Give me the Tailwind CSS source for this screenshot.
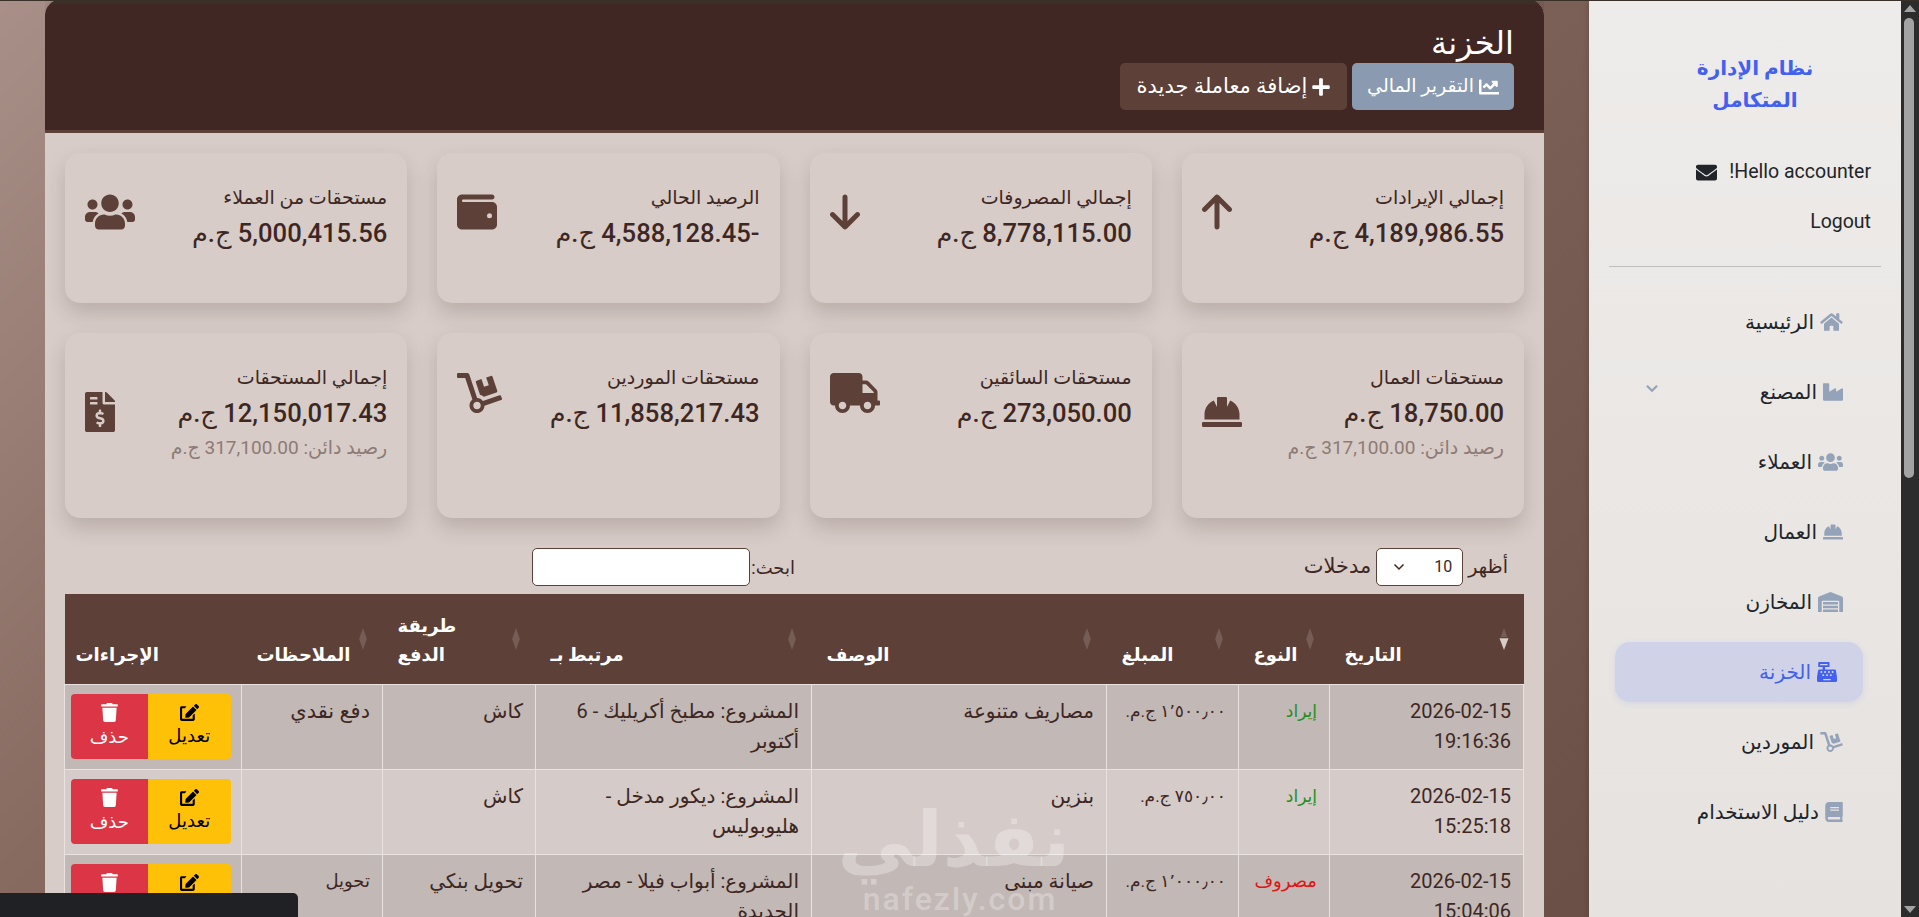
<!DOCTYPE html>
<html lang="ar" dir="rtl">
<head>
<meta charset="utf-8">
<title>الخزنة</title>
<script src="https://cdn.jsdelivr.net/npm/@tailwindcss/browser@4"></script>
</head>
<body class="m-0 overflow-hidden font-['Roboto','Noto_Sans','DejaVu_Sans',sans-serif]">
<div class="relative flex h-[917px] w-[1919px] overflow-hidden bg-[linear-gradient(135deg,#a89088_0%,#86695f_32%,#7a6056_55%,#6a5046_87%)] text-[#3e2723]">

  <!-- scrollbar -->
  <div class="relative w-[18px] shrink-0 bg-[#2c2c2c]">
    <div class="mx-auto mt-[5px] h-0 w-0 border-x-[6px] border-b-[7px] border-x-transparent border-b-[#a3a3a3]"></div>
    <div class="absolute left-[3px] top-[18px] h-[460px] w-[10px] rounded-full bg-[#a3a3a3]"></div>
    <div class="absolute bottom-[4px] left-[3px] h-0 w-0 border-x-[6px] border-t-[7px] border-x-transparent border-t-[#a3a3a3]"></div>
  </div>

  <!-- sidebar -->
  <aside class="flex w-[312px] shrink-0 flex-col bg-[linear-gradient(180deg,#eeecea,#e6e2e0)] shadow-[0_0_6px_rgba(0,0,0,0.15)]">
    <div class="mr-[56px] mt-[52px] h-[64px] w-[180px] text-center text-[20px] font-bold leading-[32px] text-[#4361ee]">نظام الإدارة المتكامل</div>
    <div class="mt-[41px] flex h-[30px] items-center gap-[12px] pr-[30px] text-[19.500px] text-[#212529]">
      <svg viewBox="0 0 512 512" class="order-2 h-[21px] w-[21px] fill-[#212529]"><path d="M502.3 190.8c3.9-3.1 9.7-.2 9.7 4.7V400c0 26.5-21.5 48-48 48H48c-26.5 0-48-21.5-48-48V195.6c0-5 5.7-7.8 9.7-4.7 22.4 17.4 52.1 39.5 154.1 113.6 21.1 15.4 56.7 47.8 92.2 47.6 35.7.3 72-32.8 92.3-47.6 102-74.1 131.6-96.3 154-113.7zM256 320c23.2.4 56.6-29.2 73.4-41.4 132.7-96.3 142.8-104.7 173.4-128.7 5.8-4.5 9.2-11.5 9.2-18.9v-19c0-26.5-21.5-48-48-48H48C21.5 64 0 85.5 0 112v19c0 7.4 3.4 14.3 9.2 18.9 30.6 23.9 40.7 32.4 173.4 128.7 16.8 12.2 50.2 41.800 73.4 41.4z"/></svg>
      <span>Hello accounter!</span>
    </div>
    <div class="mt-[20px] h-[30px] pr-[30px] text-[19.500px] leading-[30px] text-[#212529]">Logout</div>
    <div class="mx-[20px] mt-[29px] h-px bg-[#bdbdbd]"></div>

    <nav class="mt-[25px] flex flex-col gap-[10px] text-[20px] text-[#212529]">
      <a class="flex h-[60px] items-center gap-[6px] pr-[58px]">
        <svg viewBox="0 0 576 512" class="h-[20px] w-[23px] fill-[#94a3b8]"><path d="M280.37 148.26L96 300.11V464a16 16 0 0 0 16 16l112.06-.29a16 16 0 0 0 15.92-16V368a16 16 0 0 1 16-16h64a16 16 0 0 1 16 16v95.64a16 16 0 0 0 16 16.05L464 480a16 16 0 0 0 16-16V300L295.67 148.26a12.19 12.19 0 0 0-15.3 0zM571.6 251.47L488 182.56V44.05a12 12 0 0 0-12-12h-56a12 12 0 0 0-12 12v72.61L318.47 43a48 48 0 0 0-61 0L4.34 251.47a12 12 0 0 0-1.6 16.9l25.5 31A12 12 0 0 0 45.15 301l235.22-193.74a12.19 12.19 0 0 1 15.3 0L530.9 301a12 12 0 0 0 16.9-1.6l25.5-31a12 12 0 0 0-1.7-16.93z"/></svg>
        <span>الرئيسية</span>
      </a>
      <a class="relative flex h-[60px] items-center gap-[6px] pr-[58px]">
        <svg viewBox="0 0 512 512" class="h-[20px] w-[20px] fill-[#94a3b8]"><path d="M475.115 163.781L336 252.309v-68.28c0-18.916-20.931-30.399-36.885-20.248L160 252.309V56c0-13.255-10.745-24-24-24H24C10.745 32 0 42.745 0 56v400c0 13.255 10.745 24 24 24h464c13.255 0 24-10.745 24-24V184.029c0-18.917-20.931-30.399-36.885-20.248z"/></svg>
        <span>المصنع</span>
        <svg viewBox="0 0 12 8" class="absolute left-[56px] top-[22px] h-[9px] w-[14px] fill-none stroke-[#94a3b8] stroke-2"><path d="M1.5 1.5 6 6l4.500-4.500"/></svg>
      </a>
      <a class="flex h-[60px] items-center gap-[6px] pr-[58px]">
        <svg viewBox="0 0 640 512" class="h-[20px] w-[25px] fill-[#94a3b8]"><path d="M96 224c35.3 0 64-28.7 64-64s-28.7-64-64-64-64 28.7-64 64 28.7 64 64 64zm448 0c35.3 0 64-28.7 64-64s-28.7-64-64-64-64 28.7-64 64 28.7 64 64 64zm32 32h-64c-17.6 0-33.5 7.1-45.1 18.6 40.3 22.1 68.9 62 75.1 109.4h66c17.7 0 32-14.3 32-32v-32c0-35.3-28.7-64-64-64zm-256 0c61.9 0 112-50.1 112-112S381.900 32 320 32 208 82.100 208 144s50.100 112 112 112zm76.800 32h-8.300c-20.800 10-43.900 16-68.500 16s-47.600-6-68.500-16h-8.300C179.600 288 128 339.600 128 403.200V432c0 26.500 21.500 48 48 48h288c26.500 0 48-21.500 48-48v-28.800c0-63.600-51.600-115.200-115.200-115.200zm-223.700-13.400C161.500 263.100 145.600 256 128 256H64c-35.300 0-64 28.700-64 64v32c0 17.700 14.300 32 32 32h65.900c6.300-47.400 34.900-87.300 75.200-109.400z"/></svg>
        <span>العملاء</span>
      </a>
      <a class="flex h-[60px] items-center gap-[6px] pr-[58px]">
        <svg viewBox="0 0 512 512" class="h-[20px] w-[20px] fill-[#94a3b8]"><path d="M480 288c0-80.250-49.280-148.920-119.190-177.620L320 192V80a16 16 0 0 0-16-16h-96a16 16 0 0 0-16 16v112l-40.810-81.620C81.280 139.080 32 207.750 32 288v64h448zm16 96H16a16 16 0 0 0-16 16v32a16 16 0 0 0 16 16h480a16 16 0 0 0 16-16v-32a16 16 0 0 0-16-16z"/></svg>
        <span>العمال</span>
      </a>
      <a class="flex h-[60px] items-center gap-[6px] pr-[58px]">
        <svg viewBox="0 0 640 512" class="h-[20px] w-[25px] fill-[#94a3b8]"><path d="M504 352H136.400c-4.400 0-8 3.600-8 8l-.1 48c0 4.400 3.600 8 8 8H504c4.400 0 8-3.600 8-8v-48c0-4.400-3.600-8-8-8zm0 96H136.100c-4.400 0-8 3.600-8 8l-.1 48c0 4.400 3.600 8 8 8h368c4.400 0 8-3.600 8-8v-48c0-4.400-3.600-8-8-8zm0-192H136.600c-4.400 0-8 3.600-8 8l-.1 48c0 4.400 3.600 8 8 8H504c4.400 0 8-3.600 8-8v-48c0-4.400-3.600-8-8-8zm106.500-139L338.400 3.700a48.150 48.150 0 0 0-36.900 0L29.500 117C11.700 124.500 0 141.900 0 161.300V504c0 4.400 3.600 8 8 8h80c4.400 0 8-3.600 8-8V256c0-17.600 14.600-32 32.600-32h382.800c18 0 32.600 14.400 32.600 32v248c0 4.400 3.600 8 8 8h80c4.400 0 8-3.600 8-8V161.300c0-19.400-11.700-36.800-29.500-44.300z"/></svg>
        <span>المخازن</span>
      </a>
      <a class="ml-[26px] mr-[38px] flex h-[60px] items-center gap-[6px] rounded-[15px] bg-[#d0d3e8] pr-[26px] text-[#4361ee] shadow-[0_2px_6px_rgba(67,97,238,0.1)]">
        <svg viewBox="0 0 512 512" class="h-[20px] w-[20px] fill-[#4361ee]"><path d="M511.100 378.800l-26.700-160c-2.600-15.400-15.900-26.700-31.600-26.700H208v-64h96c8.800 0 16-7.200 16-16V16c0-8.800-7.200-16-16-16H48c-8.800 0-16 7.200-16 16v96c0 8.800 7.200 16 16 16h96v64H59.100c-15.600 0-29 11.300-31.600 26.700L.8 378.700c-.6 3.500-.9 7-.9 10.500V480c0 17.700 14.300 32 32 32h448c17.700 0 32-14.300 32-32v-90.700c.1-3.500-.2-7-.8-10.500zM280 248c0-8.800 7.200-16 16-16h16c8.800 0 16 7.200 16 16v16c0 8.800-7.200 16-16 16h-16c-8.800 0-16-7.200-16-16v-16zm-32 64h16c8.800 0 16 7.200 16 16v16c0 8.800-7.200 16-16 16h-16c-8.800 0-16-7.200-16-16v-16c0-8.800 7.200-16 16-16zm-32-80c8.800 0 16 7.200 16 16v16c0 8.800-7.200 16-16 16h-16c-8.800 0-16-7.200-16-16v-16c0-8.800 7.200-16 16-16h16zM80 80V48h192v32H80zm40 200h-16c-8.800 0-16-7.200-16-16v-16c0-8.800 7.200-16 16-16h16c8.800 0 16 7.200 16 16v16c0 8.800-7.200 16-16 16zm16 64v-16c0-8.800 7.200-16 16-16h16c8.800 0 16 7.200 16 16v16c0 8.800-7.200 16-16 16h-16c-8.800 0-16-7.200-16-16zm216 112c0 4.400-3.600 8-8 8H168c-4.400 0-8-3.600-8-8v-16c0-4.400 3.600-8 8-8h176c4.400 0 8 3.600 8 8v16zm24-112c0 8.800-7.200 16-16 16h-16c-8.800 0-16-7.200-16-16v-16c0-8.800 7.200-16 16-16h16c8.800 0 16 7.200 16 16v16zm48-80c0 8.800-7.200 16-16 16h-16c-8.800 0-16-7.200-16-16v-16c0-8.800 7.200-16 16-16h16c8.800 0 16 7.200 16 16v16z"/></svg>
        <span>الخزنة</span>
      </a>
      <a class="flex h-[60px] items-center gap-[6px] pr-[58px]">
        <svg viewBox="0 0 576 512" class="h-[20px] w-[23px] fill-[#94a3b8]"><path d="M294.200 277.700c18 5 34.700 13.400 49.500 24.700l161.500-53.800c8.400-2.800 12.900-11.900 10.100-20.200L454.900 47.200c-2.800-8.400-11.900-12.900-20.200-10.100l-61.100 20.400 33.100 99.400L346 177l-33.100-99.400-61.600 20.500c-8.400 2.800-12.900 11.900-10.100 20.200l53 159.400zm281 48.700L565 296c-2.800-8.400-11.900-12.900-20.200-10.100l-213.500 71.200c-17.200-22-43.600-36.400-73.500-37L158.400 21.900C154 8.800 141.800 0 128 0H16C7.200 0 0 7.200 0 16v32c0 8.800 7.200 16 16 16h88.900l92.200 276.700c-26.100 20.400-41.700 53.600-36 90.500 6.100 39.400 37.900 72.300 77.300 79.200 60.200 10.700 112.300-34.800 113.400-92.600l213.300-71.200c8.300-2.800 12.900-11.800 10.100-20.200zM256 464c-26.500 0-48-21.500-48-48s21.500-48 48-48 48 21.500 48 48-21.500 48-48 48z"/></svg>
        <span>الموردين</span>
      </a>
      <a class="flex h-[60px] items-center gap-[6px] pr-[58px]">
        <svg viewBox="0 0 448 512" class="h-[20px] w-[18px] fill-[#94a3b8]"><path d="M448 360V24c0-13.300-10.700-24-24-24H96C43 0 0 43 0 96v320c0 53 43 96 96 96h328c13.300 0 24-10.700 24-24v-16c0-7.500-3.500-14.300-8.900-18.700-4.200-15.400-4.200-59.300 0-74.700 5.400-4.300 8.900-11.100 8.900-18.600zM128 134c0-3.300 2.700-6 6-6h212c3.300 0 6 2.700 6 6v20c0 3.300-2.700 6-6 6H134c-3.300 0-6-2.700-6-6v-20zm0 64c0-3.300 2.700-6 6-6h212c3.300 0 6 2.700 6 6v20c0 3.300-2.700 6-6 6H134c-3.300 0-6-2.700-6-6v-20zm253.400 250H96c-17.700 0-32-14.300-32-32 0-17.600 14.400-32 32-32h285.400c-1.900 17.100-1.900 46.900 0 64z"/></svg>
        <span>دليل الاستخدام</span>
      </a>
    </nav>
  </aside>

  <!-- main -->
  <main class="ml-[45px] mr-[45px] h-[917px] w-[1499px] shrink-0 overflow-hidden">
    <section class="overflow-hidden rounded-t-[15px] bg-[#d7ccc8] shadow-[0_4px_20px_rgba(0,0,0,0.25)]">
      <header class="h-[133px] border-b-[3px] border-t-[4px] border-b-[#5d4037] border-t-[#3a3028] bg-[#402723] pr-[30px] pt-[20px]">
        <h1 class="h-[38px] text-[32px] font-normal leading-[38px] text-white">الخزنة</h1>
        <div class="mt-[1px] flex gap-[5px]">
          <a class="flex h-[47px] w-[162px] items-center justify-center gap-[5px] rounded-[5px] bg-[#8a9ab0] text-[19px] text-white">
            <svg viewBox="0 0 512 512" class="h-[20px] w-[20px] fill-white"><path d="M496 384H64V80c0-8.840-7.160-16-16-16H16C7.160 64 0 71.160 0 80v336c0 17.670 14.330 32 32 32h464c8.840 0 16-7.160 16-16v-32c0-8.840-7.160-16-16-16zM464 96H345.940c-21.380 0-32.090 25.850-16.970 40.970l32.400 32.400L288 242.750l-73.370-73.370c-12.500-12.500-32.760-12.500-45.250 0l-68.690 68.690c-6.250 6.250-6.250 16.380 0 22.630l22.620 22.620c6.250 6.250 16.380 6.250 22.630 0L192 237.250l73.370 73.370c12.500 12.500 32.760 12.500 45.250 0l96-96 32.400 32.400c15.120 15.120 40.970 4.410 40.970-16.970V112c0-8.840-7.160-16-16-16z"/></svg>
            <span>التقرير المالي</span>
          </a>
          <a class="flex h-[47px] w-[227px] items-center justify-center gap-[5px] rounded-[5px] bg-[#5d4037] text-[21px] text-white">
            <svg viewBox="0 0 448 512" class="h-[20px] w-[18px] fill-white"><path d="M416 208H272V64c0-17.670-14.330-32-32-32h-32c-17.670 0-32 14.330-32 32v144H32c-17.670 0-32 14.330-32 32v32c0 17.670 14.330 32 32 32h144v144c0 17.670 14.330 32 32 32h32c17.670 0 32-14.330 32-32V304h144c17.670 0 32-14.330 32-32v-32c0-17.670-14.330-32-32-32z"/></svg>
            <span>إضافة معاملة جديدة</span>
          </a>
        </div>
      </header>

      <div class="px-[20px] pt-[20px]">
        <!-- row 1 -->
        <div class="grid grid-cols-4 gap-[30px]">
          <div class="flex h-[150px] items-start justify-between rounded-[15px] bg-[#d7ccc8] px-[20px] pt-[30px] shadow-[0_10px_20px_rgba(62,39,35,0.18)]">
            <div><div class="h-[30px] text-[19px] leading-[30px]">إجمالي الإيرادات</div><div class="mt-[3px] h-[34px] text-[25.600px] font-medium leading-[34px]">4,189,986.55 ج.م</div></div>
            <svg viewBox="0 0 384 512" class="mt-[9px] h-[40px] w-[30px] fill-[#5d4037]"><path d="M214.600 41.400c-12.500-12.500-32.800-12.500-45.300 0l-160 160c-12.500 12.500-12.500 32.800 0 45.300s32.800 12.500 45.300 0L160 141.200V448c0 17.700 14.300 32 32 32s32-14.300 32-32V141.200L329.400 246.600c12.500 12.500 32.800 12.500 45.300 0s12.500-32.800 0-45.300l-160-160z"/></svg>
          </div>
          <div class="flex h-[150px] items-start justify-between rounded-[15px] bg-[#d7ccc8] px-[20px] pt-[30px] shadow-[0_10px_20px_rgba(62,39,35,0.18)]">
            <div><div class="h-[30px] text-[19px] leading-[30px]">إجمالي المصروفات</div><div class="mt-[3px] h-[34px] text-[25.600px] font-medium leading-[34px]">8,778,115.00 ج.م</div></div>
            <svg viewBox="0 0 384 512" class="mt-[9px] h-[40px] w-[30px] fill-[#5d4037]"><path d="M169.400 470.600c12.500 12.500 32.800 12.500 45.300 0l160-160c12.500-12.500 12.500-32.800 0-45.300s-32.800-12.500-45.300 0L224 370.800 224 64c0-17.700-14.300-32-32-32s-32 14.300-32 32l0 306.700L54.600 265.400c-12.500-12.500-32.800-12.500-45.300 0s-12.500 32.800 0 45.300l160 160z"/></svg>
          </div>
          <div class="flex h-[150px] items-start justify-between rounded-[15px] bg-[#d7ccc8] px-[20px] pt-[30px] shadow-[0_10px_20px_rgba(62,39,35,0.18)]">
            <div><div class="h-[30px] text-[19px] leading-[30px]">الرصيد الحالي</div><div class="mt-[3px] h-[34px] text-[25.600px] font-medium leading-[34px]">-4,588,128.45 ج.م</div></div>
            <svg viewBox="0 0 512 512" class="mt-[9px] h-[40px] w-[40px] fill-[#5d4037]"><path d="M64 32C28.700 32 0 60.700 0 96V416c0 35.300 28.700 64 64 64H448c35.300 0 64-28.700 64-64V192c0-35.300-28.700-64-64-64H80c-8.800 0-16-7.200-16-16s7.200-16 16-16H448c17.700 0 32-14.300 32-32s-14.300-32-32-32H64zM416 272a32 32 0 1 1 0 64 32 32 0 1 1 0-64z"/></svg>
          </div>
          <div class="flex h-[150px] items-start justify-between rounded-[15px] bg-[#d7ccc8] px-[20px] pt-[30px] shadow-[0_10px_20px_rgba(62,39,35,0.18)]">
            <div><div class="h-[30px] text-[19px] leading-[30px]">مستحقات من العملاء</div><div class="mt-[3px] h-[34px] text-[25.600px] font-medium leading-[34px]">5,000,415.56 ج.م</div></div>
            <svg viewBox="0 0 640 512" class="mt-[9px] h-[40px] w-[50px] fill-[#5d4037]"><path d="M96 224c35.300 0 64-28.700 64-64s-28.700-64-64-64-64 28.700-64 64 28.700 64 64 64zm448 0c35.300 0 64-28.700 64-64s-28.700-64-64-64-64 28.700-64 64 28.700 64 64 64zm32 32h-64c-17.600 0-33.500 7.100-45.100 18.600 40.300 22.100 68.900 62 75.100 109.400h66c17.700 0 32-14.300 32-32v-32c0-35.300-28.700-64-64-64zm-256 0c61.900 0 112-50.100 112-112S381.900 32 320 32 208 82.100 208 144s50.100 112 112 112zm76.800 32h-8.300c-20.800 10-43.900 16-68.500 16s-47.600-6-68.500-16h-8.300C179.600 288 128 339.600 128 403.200V432c0 26.500 21.500 48 48 48h288c26.500 0 48-21.500 48-48v-28.800c0-63.600-51.600-115.200-115.200-115.200zm-223.700-13.400C161.500 263.100 145.600 256 128 256H64c-35.300 0-64 28.700-64 64v32c0 17.700 14.300 32 32 32h65.900c6.300-47.400 34.900-87.300 75.200-109.400z"/></svg>
          </div>
        </div>

        <!-- row 2 -->
        <div class="mt-[30px] grid grid-cols-4 gap-[30px]">
          <div class="flex h-[185px] items-start justify-between rounded-[15px] bg-[#d7ccc8] px-[20px] pt-[30px] shadow-[0_10px_20px_rgba(62,39,35,0.18)]">
            <div><div class="h-[30px] text-[19px] leading-[30px]">مستحقات العمال</div><div class="mt-[3px] h-[34px] text-[25.600px] font-medium leading-[34px]">18,750.00 ج.م</div><div class="mt-[1px] h-[34px] text-[19px] leading-[34px] text-[#8d7b75]">رصيد دائن: 317,100.00 ج.م</div></div>
            <svg viewBox="0 0 512 512" class="mt-[29px] h-[40px] w-[40px] fill-[#5d4037]"><path d="M480 288c0-80.250-49.280-148.920-119.190-177.620L320 192V80a16 16 0 0 0-16-16h-96a16 16 0 0 0-16 16v112l-40.810-81.620C81.280 139.080 32 207.750 32 288v64h448zm16 96H16a16 16 0 0 0-16 16v32a16 16 0 0 0 16 16h480a16 16 0 0 0 16-16v-32a16 16 0 0 0-16-16z"/></svg>
          </div>
          <div class="flex h-[185px] items-start justify-between rounded-[15px] bg-[#d7ccc8] px-[20px] pt-[30px] shadow-[0_10px_20px_rgba(62,39,35,0.18)]">
            <div><div class="h-[30px] text-[19px] leading-[30px]">مستحقات السائقين</div><div class="mt-[3px] h-[34px] text-[25.600px] font-medium leading-[34px]">273,050.00 ج.م</div></div>
            <svg viewBox="0 0 640 512" class="mt-[10px] h-[40px] w-[50px] fill-[#5d4037]"><path d="M624 352h-16V243.900c0-12.700-5.100-24.900-14.100-33.900L494 110.100c-9-9-21.200-14.100-33.900-14.100H416V48c0-26.500-21.500-48-48-48H48C21.500 0 0 21.500 0 48v320c0 26.500 21.500 48 48 48h16c0 53 43 96 96 96s96-43 96-96h128c0 53 43 96 96 96s96-43 96-96h48c8.800 0 16-7.200 16-16v-32c0-8.800-7.200-16-16-16zM160 464c-26.500 0-48-21.500-48-48s21.500-48 48-48 48 21.500 48 48-21.500 48-48 48zm320 0c-26.500 0-48-21.500-48-48s21.500-48 48-48 48 21.500 48 48-21.500 48-48 48zm80-208H416V144h44.100l99.900 99.900V256z"/></svg>
          </div>
          <div class="flex h-[185px] items-start justify-between rounded-[15px] bg-[#d7ccc8] px-[20px] pt-[30px] shadow-[0_10px_20px_rgba(62,39,35,0.18)]">
            <div><div class="h-[30px] text-[19px] leading-[30px]">مستحقات الموردين</div><div class="mt-[3px] h-[34px] text-[25.600px] font-medium leading-[34px]">11,858,217.43 ج.م</div></div>
            <svg viewBox="0 0 576 512" class="mt-[10px] h-[40px] w-[45px] fill-[#5d4037]"><path d="M294.200 277.700c18 5 34.700 13.400 49.500 24.700l161.500-53.800c8.400-2.800 12.900-11.900 10.100-20.200L454.900 47.200c-2.800-8.400-11.900-12.900-20.200-10.100l-61.100 20.400 33.100 99.400L346 177l-33.100-99.400-61.600 20.500c-8.400 2.800-12.900 11.900-10.100 20.200l53 159.400zm281 48.700L565 296c-2.800-8.400-11.900-12.900-20.200-10.100l-213.500 71.200c-17.200-22-43.600-36.400-73.500-37L158.400 21.900C154 8.800 141.800 0 128 0H16C7.200 0 0 7.200 0 16v32c0 8.800 7.200 16 16 16h88.900l92.200 276.700c-26.100 20.400-41.700 53.600-36 90.500 6.100 39.400 37.900 72.300 77.300 79.200 60.200 10.700 112.300-34.800 113.400-92.600l213.300-71.200c8.300-2.800 12.900-11.800 10.100-20.200zM256 464c-26.500 0-48-21.500-48-48s21.500-48 48-48 48 21.500 48 48-21.500 48-48 48z"/></svg>
          </div>
          <div class="flex h-[185px] items-start justify-between rounded-[15px] bg-[#d7ccc8] px-[20px] pt-[30px] shadow-[0_10px_20px_rgba(62,39,35,0.18)]">
            <div><div class="h-[30px] text-[19px] leading-[30px]">إجمالي المستحقات</div><div class="mt-[3px] h-[34px] text-[25.600px] font-medium leading-[34px]">12,150,017.43 ج.م</div><div class="mt-[1px] h-[34px] text-[19px] leading-[34px] text-[#8d7b75]">رصيد دائن: 317,100.00 ج.م</div></div>
            <svg viewBox="0 0 384 512" class="mt-[29px] h-[40px] w-[30px] fill-[#5d4037]"><path d="M377 105L279.100 7c-4.500-4.500-10.600-7-17-7H256v128h128v-6.100c0-6.300-2.500-12.400-7-16.900zm-153 31V0H24C10.700 0 0 10.700 0 24v464c0 13.300 10.700 24 24 24h336c13.300 0 24-10.700 24-24V160H248c-13.200 0-24-10.800-24-24zM64 72c0-4.420 3.580-8 8-8h80c4.420 0 8 3.580 8 8v16c0 4.420-3.580 8-8 8H72c-4.420 0-8-3.580-8-8V72zm0 80v-16c0-4.420 3.580-8 8-8h80c4.420 0 8 3.580 8 8v16c0 4.420-3.580 8-8 8H72c-4.420 0-8-3.580-8-8zm144 263.880V440c0 4.420-3.580 8-8 8h-16c-4.420 0-8-3.580-8-8v-24.290c-11.290-.58-22.270-4.520-31.370-11.350-3.900-2.930-4.100-8.770-.57-12.140l11.750-11.210c2.770-2.640 6.890-2.760 10.130-.73 3.870 2.420 8.260 3.720 12.820 3.720h28.110c6.500 0 11.800-5.920 11.800-13.190 0-5.950-3.610-11.190-8.770-12.730l-45-13.500c-18.590-5.580-31.580-23.420-31.580-43.390 0-24.520 19.050-44.440 42.670-45.070V232c0-4.420 3.580-8 8-8h16c4.420 0 8 3.580 8 8v24.290c11.290.58 22.270 4.510 31.370 11.350 3.900 2.930 4.100 8.770.57 12.140l-11.750 11.210c-2.770 2.640-6.890 2.760-10.130.73-3.870-2.430-8.260-3.720-12.820-3.720h-28.110c-6.500 0-11.800 5.920-11.800 13.190 0 5.950 3.610 11.190 8.770 12.730l45 13.500c18.590 5.580 31.580 23.420 31.580 43.390 0 24.530-19.050 44.440-42.670 45.070z"/></svg>
          </div>
        </div>

        <!-- filters -->
        <div class="mt-[30px] flex h-[38px] items-center">
          <div class="flex w-[729px] items-center pr-[16px] text-[19px]">
            <span>أظهر</span>
            <div class="mx-[5px] flex h-[38px] w-[87px] items-center justify-between rounded-[5px] border border-[#5d4037] bg-white pl-[16px] pr-[10px] text-[16px]">
              <span>10</span>
              <svg viewBox="0 0 12 8" class="h-[8px] w-[12px] fill-none stroke-[#3e2723] stroke-[1.5]"><path d="M1.500 1.500 6 6l4.500-4.500"/></svg>
            </div>
            <span class="text-[21px]">مدخلات</span>
          </div>
          <div class="flex items-center text-[18px]">
            <span class="ml-[1px]">ابحث:</span>
            <div class="h-[38px] w-[218px] rounded-[5px] border border-[#5d4037] bg-white"></div>
          </div>
        </div>

        <!-- table -->
        <table class="mt-[8px] w-[1459px] table-fixed border-collapse text-[20px] leading-[30px]">
          <colgroup>
            <col class="w-[194px]"><col class="w-[91px]"><col class="w-[132px]"><col class="w-[295px]"><col class="w-[276px]"><col class="w-[153px]"><col class="w-[141px]"><col class="w-[177px]">
          </colgroup>
          <thead class="bg-[#5d4037] text-white">
            <tr class="h-[90px]">
              <th class="relative pb-[15px] pl-[15px] text-left align-bottom text-[18px] font-bold leading-[29px]">التاريخ<svg viewBox="0 0 14 34" class="absolute right-[13px] top-[34px] h-[22px] w-[14px]"><path d="M7 0l5 14H2z" fill="#fff" opacity=".15"/><path d="M0 16h14L7 34z" fill="#d7ccc8"/></svg></th>
              <th class="relative pb-[15px] pl-[15px] text-left align-bottom text-[18px] font-bold leading-[29px]">النوع<svg viewBox="0 0 14 34" class="absolute right-[13px] top-[34px] h-[22px] w-[14px] fill-white/15"><path d="M7 0 13 17 7 34 1 17z"/></svg></th>
              <th class="relative pb-[15px] pl-[15px] text-left align-bottom text-[18px] font-bold leading-[29px]">المبلغ<svg viewBox="0 0 14 34" class="absolute right-[13px] top-[34px] h-[22px] w-[14px] fill-white/15"><path d="M7 0 13 17 7 34 1 17z"/></svg></th>
              <th class="relative pb-[15px] pl-[15px] text-left align-bottom text-[18px] font-bold leading-[29px]">الوصف<svg viewBox="0 0 14 34" class="absolute right-[13px] top-[34px] h-[22px] w-[14px] fill-white/15"><path d="M7 0 13 17 7 34 1 17z"/></svg></th>
              <th class="relative pb-[15px] pl-[15px] text-left align-bottom text-[18px] font-bold leading-[29px]">مرتبط بـ<svg viewBox="0 0 14 34" class="absolute right-[13px] top-[34px] h-[22px] w-[14px] fill-white/15"><path d="M7 0 13 17 7 34 1 17z"/></svg></th>
              <th class="relative pb-[15px] pl-[15px] text-left align-bottom text-[18px] font-bold leading-[29px]">طريقة<br>الدفع<svg viewBox="0 0 14 34" class="absolute right-[13px] top-[34px] h-[22px] w-[14px] fill-white/15"><path d="M7 0 13 17 7 34 1 17z"/></svg></th>
              <th class="relative pb-[15px] pl-[15px] text-left align-bottom text-[18px] font-bold leading-[29px]">الملاحظات<svg viewBox="0 0 14 34" class="absolute right-[13px] top-[34px] h-[22px] w-[14px] fill-white/15"><path d="M7 0 13 17 7 34 1 17z"/></svg></th>
              <th class="pb-[15px] pl-[11px] text-left align-bottom text-[18px] font-bold leading-[29px]">الإجراءات</th>
            </tr>
          </thead>
          <tbody>
            <tr class="h-[85px] bg-[#c2b8b5]">
              <td class="border border-[#e8e2e0] px-[12px] pt-[11px] align-top">2026-02-15<br>19:16:36</td>
              <td class="border border-[#e8e2e0] px-[12px] pt-[11px] align-top text-[17px] text-[#1f8f1f]">إيراد</td>
              <td class="border border-[#e8e2e0] px-[12px] pt-[11px] align-top text-[17px]">١٬٥٠٠٫٠٠ ج.م.</td>
              <td class="border border-[#e8e2e0] px-[12px] pt-[11px] align-top">مصاريف متنوعة</td>
              <td class="border border-[#e8e2e0] px-[12px] pt-[11px] align-top">المشروع: مطبخ أكريليك - 6<br>أكتوبر</td>
              <td class="border border-[#e8e2e0] px-[12px] pt-[11px] align-top">كاش</td>
              <td class="border border-[#e8e2e0] px-[12px] pt-[11px] align-top text-[21px]">دفع نقدي</td>
              <td class="border border-[#e8e2e0] p-0 align-top">
                <div class="ml-[6px] mr-[10px] mt-[9px] flex h-[65px] overflow-hidden rounded-[4px] text-[18px] leading-[24px]">
                  <a class="flex w-[84px] flex-col items-center justify-center gap-[3px] bg-[#ffc107] text-black"><svg viewBox="0 0 576 512" class="h-[17px] w-[19px] fill-black"><path d="M402.600 83.200l90.200 90.200c3.800 3.800 3.800 10 0 13.800L274.400 405.600l-92.800 10.300c-12.400 1.400-22.900-9.100-21.500-21.500l10.300-92.800L388.800 83.200c3.800-3.800 10-3.800 13.800 0zm162-22.900l-48.800-48.800c-15.200-15.200-39.900-15.200-55.200 0l-35.400 35.400c-3.800 3.800-3.800 10 0 13.800l90.200 90.200c3.800 3.800 10 3.800 13.800 0l35.400-35.400c15.200-15.300 15.200-40 0-55.200zM384 346.200V448H64V128h73.900c3.200 0 6.200-1.300 8.500-3.500l40-40c7.600-7.600 2.200-20.500-8.500-20.500H48C21.500 64 0 85.500 0 112v352c0 26.500 21.500 48 48 48h352c26.500 0 48-21.500 48-48V306.200c0-10.700-12.900-16-20.500-8.500l-40 40c-2.200 2.300-3.500 5.300-3.500 8.500z"/></svg>تعديل</a>
                  <a class="flex w-[77px] flex-col items-center justify-center gap-[3px] bg-[#dc3545] text-white"><svg viewBox="0 0 448 512" class="h-[19px] w-[17px] fill-white"><path d="M432 32H312l-9.400-18.700A24 24 0 0 0 281.100 0H166.800a23.720 23.720 0 0 0-21.400 13.300L136 32H16A16 16 0 0 0 0 48v32a16 16 0 0 0 16 16h416a16 16 0 0 0 16-16V48a16 16 0 0 0-16-16zM53.200 467a48 48 0 0 0 47.900 45h245.800a48 48 0 0 0 47.900-45L416 128H32z"/></svg>حذف</a>
                </div>
              </td>
            </tr>
            <tr class="h-[85px] bg-[#d5cbc8]">
              <td class="border border-[#e8e2e0] px-[12px] pt-[11px] align-top">2026-02-15<br>15:25:18</td>
              <td class="border border-[#e8e2e0] px-[12px] pt-[11px] align-top text-[17px] text-[#1f8f1f]">إيراد</td>
              <td class="border border-[#e8e2e0] px-[12px] pt-[11px] align-top text-[17px]">٧٥٠٫٠٠ ج.م.</td>
              <td class="border border-[#e8e2e0] px-[12px] pt-[11px] align-top">بنزين</td>
              <td class="border border-[#e8e2e0] px-[12px] pt-[11px] align-top">المشروع: ديكور مدخل -<br>هليوبوليس</td>
              <td class="border border-[#e8e2e0] px-[12px] pt-[11px] align-top">كاش</td>
              <td class="border border-[#e8e2e0] px-[12px] pt-[11px] align-top"></td>
              <td class="border border-[#e8e2e0] p-0 align-top">
                <div class="ml-[6px] mr-[10px] mt-[9px] flex h-[65px] overflow-hidden rounded-[4px] text-[18px] leading-[24px]">
                  <a class="flex w-[84px] flex-col items-center justify-center gap-[3px] bg-[#ffc107] text-black"><svg viewBox="0 0 576 512" class="h-[17px] w-[19px] fill-black"><path d="M402.600 83.200l90.200 90.200c3.800 3.800 3.800 10 0 13.800L274.400 405.600l-92.800 10.300c-12.400 1.400-22.900-9.100-21.500-21.500l10.300-92.800L388.800 83.200c3.800-3.800 10-3.800 13.800 0zm162-22.900l-48.800-48.800c-15.200-15.200-39.900-15.200-55.200 0l-35.400 35.400c-3.800 3.800-3.800 10 0 13.800l90.200 90.200c3.800 3.800 10 3.800 13.800 0l35.400-35.400c15.200-15.300 15.200-40 0-55.200zM384 346.200V448H64V128h73.900c3.200 0 6.200-1.300 8.500-3.500l40-40c7.600-7.600 2.200-20.500-8.500-20.500H48C21.500 64 0 85.500 0 112v352c0 26.500 21.500 48 48 48h352c26.500 0 48-21.500 48-48V306.200c0-10.700-12.900-16-20.500-8.500l-40 40c-2.200 2.300-3.500 5.300-3.500 8.500z"/></svg>تعديل</a>
                  <a class="flex w-[77px] flex-col items-center justify-center gap-[3px] bg-[#dc3545] text-white"><svg viewBox="0 0 448 512" class="h-[19px] w-[17px] fill-white"><path d="M432 32H312l-9.400-18.700A24 24 0 0 0 281.100 0H166.800a23.720 23.720 0 0 0-21.400 13.300L136 32H16A16 16 0 0 0 0 48v32a16 16 0 0 0 16 16h416a16 16 0 0 0 16-16V48a16 16 0 0 0-16-16zM53.200 467a48 48 0 0 0 47.900 45h245.800a48 48 0 0 0 47.900-45L416 128H32z"/></svg>حذف</a>
                </div>
              </td>
            </tr>
            <tr class="h-[85px] bg-[#c2b8b5]">
              <td class="border border-[#e8e2e0] px-[12px] pt-[11px] align-top">2026-02-15<br>15:04:06</td>
              <td class="border border-[#e8e2e0] px-[12px] pt-[11px] align-top text-[18px] text-[#e01414]">مصروف</td>
              <td class="border border-[#e8e2e0] px-[12px] pt-[11px] align-top text-[17px]">١٬٠٠٠٫٠٠ ج.م.</td>
              <td class="border border-[#e8e2e0] px-[12px] pt-[11px] align-top">صيانة مبنى</td>
              <td class="border border-[#e8e2e0] px-[12px] pt-[11px] align-top">المشروع: أبواب فيلا - مصر<br>الجديدة</td>
              <td class="border border-[#e8e2e0] px-[12px] pt-[11px] align-top">تحويل بنكي</td>
              <td class="border border-[#e8e2e0] px-[12px] pt-[11px] align-top text-[18px]">تحويل</td>
              <td class="border border-[#e8e2e0] p-0 align-top">
                <div class="ml-[6px] mr-[10px] mt-[9px] flex h-[65px] overflow-hidden rounded-[4px] text-[18px] leading-[24px]">
                  <a class="flex w-[84px] flex-col items-center justify-center gap-[3px] bg-[#ffc107] text-black"><svg viewBox="0 0 576 512" class="h-[17px] w-[19px] fill-black"><path d="M402.600 83.200l90.200 90.200c3.800 3.800 3.800 10 0 13.800L274.400 405.600l-92.800 10.300c-12.400 1.400-22.900-9.100-21.500-21.500l10.300-92.800L388.800 83.200c3.800-3.800 10-3.800 13.800 0zm162-22.900l-48.800-48.800c-15.200-15.200-39.900-15.200-55.200 0l-35.400 35.400c-3.800 3.800-3.800 10 0 13.800l90.200 90.200c3.800 3.800 10 3.800 13.800 0l35.400-35.400c15.200-15.300 15.200-40 0-55.200zM384 346.200V448H64V128h73.900c3.200 0 6.200-1.300 8.500-3.500l40-40c7.600-7.600 2.200-20.500-8.500-20.500H48C21.500 64 0 85.500 0 112v352c0 26.500 21.500 48 48 48h352c26.500 0 48-21.500 48-48V306.200c0-10.700-12.900-16-20.500-8.500l-40 40c-2.200 2.300-3.500 5.300-3.500 8.500z"/></svg>تعديل</a>
                  <a class="flex w-[77px] flex-col items-center justify-center gap-[3px] bg-[#dc3545] text-white"><svg viewBox="0 0 448 512" class="h-[19px] w-[17px] fill-white"><path d="M432 32H312l-9.400-18.700A24 24 0 0 0 281.100 0H166.800a23.720 23.720 0 0 0-21.400 13.300L136 32H16A16 16 0 0 0 0 48v32a16 16 0 0 0 16 16h416a16 16 0 0 0 16-16V48a16 16 0 0 0-16-16zM53.200 467a48 48 0 0 0 47.900 45h245.800a48 48 0 0 0 47.900-45L416 128H32z"/></svg>حذف</a>
                </div>
              </td>
            </tr>
          </tbody>
        </table>
      </div>
    </section>
  </main>

  <!-- top strip, status bar, watermark -->
  <div class="absolute inset-x-0 top-0 h-px bg-[#3a3028]"></div>
  <div class="absolute bottom-0 left-0 h-[24px] w-[298px] rounded-tr-[5px] bg-[#202124]"></div>
  <div class="pointer-events-none absolute left-[850px] top-[798px] w-[220px] text-center text-white/30">
    <div class="text-[76px] font-bold leading-[84px]">نفذلي</div>
    <div dir="ltr" class="text-[32px] font-medium leading-[34px] tracking-[2px]">nafezly.com</div>
  </div>
</div>
</body>
</html>
